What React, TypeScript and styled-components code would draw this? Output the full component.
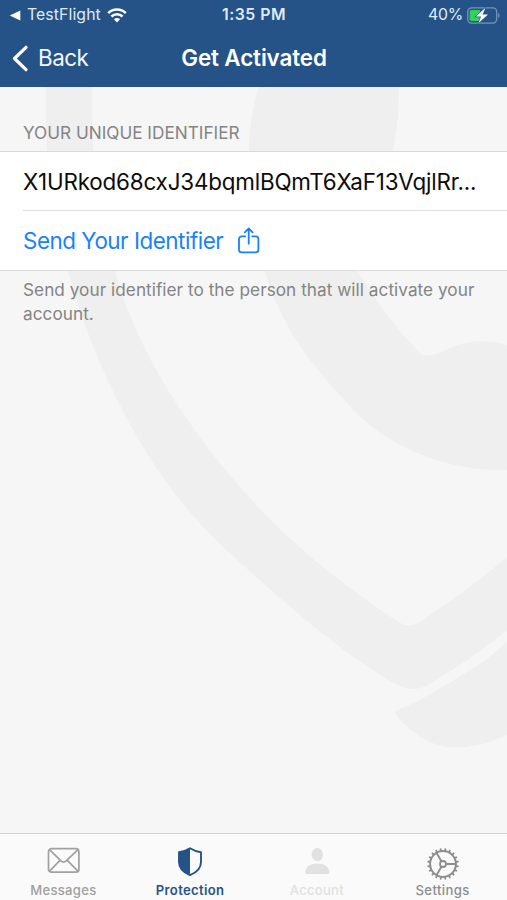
import React from 'react';
import styled, { createGlobalStyle } from 'styled-components';

const GlobalStyle = createGlobalStyle`
  * { box-sizing: border-box; }
  body { margin: 0; background: #f6f6f6; font-family: Inter, "Liberation Sans", sans-serif; }
`;

const Screen = styled.div`
  width: 507px;
  height: 900px;
  display: flex;
  flex-direction: column;
  overflow: hidden;
  background: #f6f6f6;
`;

const Header = styled.header`
  flex: none;
  height: 87px;
  background: #255387;
  color: #fff;
`;

const StatusBar = styled.div`
  height: 29px;
  padding: 0 7px 0 9px;
  display: grid;
  grid-template-columns: 1fr auto 1fr;
  align-items: center;
  font-size: 15.8px;
  line-height: 30px;
  color: #dfeaf6;
`;

const StatusGroup = styled.div<{ $end?: boolean }>`
  display: flex;
  align-items: center;
  justify-content: ${p => (p.$end ? 'flex-end' : 'flex-start')};
  gap: ${p => (p.$end ? 4 : 6)}px;
  height: 29px;
`;

const StatusText = styled.span<{ $spacing: number; $weight?: number }>`
  letter-spacing: ${p => p.$spacing}px;
  font-weight: ${p => p.$weight ?? 400};
`;

const Clock = styled(StatusText)`
  margin-left: -1px;
`;

const NavBar = styled.nav`
  height: 58px;
  padding: 0 12px;
  display: grid;
  grid-template-columns: 1fr auto 1fr;
  align-items: center;
  font-size: 22.4px;
  line-height: 58px;
`;

const BackButton = styled.button`
  display: flex;
  align-items: center;
  gap: 9px;
  padding: 0;
  border: 0;
  background: none;
  color: #f1f7fd;
  font: inherit;
  letter-spacing: -0.5px;
`;

const Title = styled.h1`
  margin: 0 0 0 1px;
  font-size: 22.4px;
  font-weight: 600;
  letter-spacing: -0.12px;
`;

const Content = styled.main`
  position: relative;
  flex: 1;
  min-height: 0;
`;

const Watermark = styled.svg`
  position: absolute;
  inset: 0;
  fill: #efefef;
`;

const Section = styled.section`
  position: relative;
`;

const SectionLabel = styled.h2`
  margin: 0;
  height: 64px;
  padding: 35px 23px 0;
  font-size: 17.2px;
  font-weight: 400;
  line-height: 22px;
  color: #848484;
`;

const List = styled.div`
  height: 120px;
  padding-left: 23px;
  background: #fff;
  border-top: 1px solid #dadada;
  border-bottom: 1px solid #dadada;
`;

const Row = styled.div<{ $action?: boolean }>`
  height: ${p => (p.$action ? 60 : 58)}px;
  display: flex;
  align-items: center;
  gap: 15px;
  font-size: 22.4px;
  letter-spacing: ${p => (p.$action ? -0.46 : -0.18)}px;
  color: ${p => (p.$action ? '#1a82f7' : '#0c0c0c')};
  white-space: nowrap;

  & + & { border-top: 1px solid #dedede; }
`;

const Footnote = styled.p`
  margin: 0;
  padding: 7px 23px 0;
  font-size: 17.2px;
  line-height: 24.3px;
  letter-spacing: 0.04px;
  color: #848484;
`;

const TabBar = styled.nav`
  flex: none;
  height: 67px;
  display: grid;
  grid-template-columns: repeat(4, 1fr);
  border-top: 1px solid #d4d4d4;
  background: #fafafa;
`;

const Tab = styled.div<{ $color: string; $weight?: number; $spacing: number }>`
  display: flex;
  flex-direction: column;
  align-items: center;
  color: ${p => p.$color};
  font-size: 13.1px;
  font-weight: ${p => p.$weight ?? 500};
  letter-spacing: ${p => p.$spacing}px;
  line-height: 18px;

  &:last-child { padding-right: 2px; }
`;

const TabIcon = styled.div<{ $low?: boolean }>`
  height: 47px;
  padding-top: ${p => (p.$low ? 13 : 10)}px;
  svg { display: block; }
`;

const CaretLeft = () => (
  <svg width="12" height="11" viewBox="0 0 12 11"><path d="M11.3.6v9.8L.8 5.5z" fill="#fff" /></svg>
);

const Wifi = () => (
  <svg width="20" height="15" viewBox="0 0 20 15" fill="none" stroke="#fff" strokeWidth="2.5">
    <path d="M1.2 5.1a12.4 12.4 0 0 1 17.6 0M4.4 8.5a7.9 7.9 0 0 1 11.2 0" />
    <path d="M10 14.6 6.9 11.3a4.4 4.4 0 0 1 6.2 0z" fill="#fff" stroke="none" />
  </svg>
);

const Battery = () => (
  <svg width="33" height="17" viewBox="0 0 33 17">
    <rect x=".7" y=".9" width="29" height="15.2" rx="4" fill="none" stroke="#7595b9" strokeWidth="1.3" />
    <path d="M31.2 6v5c1.8-.7 1.8-4.3 0-5" fill="#7595b9" />
    <path d="M4.4 3h8.5v11H4.4a1.8 1.8 0 0 1-1.8-1.8V4.8A1.8 1.8 0 0 1 4.4 3z" fill="#32d158" />
    <path d="M18.5.8 8.8 9.6h5.3l-2.8 6.7L21 7.4h-5.4z" fill="#fff" stroke="#255387" strokeWidth="1.2" paintOrder="stroke" />
  </svg>
);

const ChevronLeft = () => (
  <svg width="17" height="27" viewBox="0 0 17 27" fill="none" stroke="#fff" strokeWidth="3.2" strokeLinecap="round" strokeLinejoin="round">
    <path d="M14 2.3 2.5 13.5 14 24.7" />
  </svg>
);

const ShareIcon = () => (
  <svg width="22" height="27" viewBox="0 0 22 27" fill="none" stroke="currentColor" strokeWidth="1.8" strokeLinecap="round" strokeLinejoin="round">
    <path d="M7.2 9.3H3.6A2.6 2.6 0 0 0 1 11.9v10.9a2.6 2.6 0 0 0 2.6 2.6h14.2a2.6 2.6 0 0 0 2.6-2.6V11.9a2.6 2.6 0 0 0-2.6-2.6h-3.6M10.7 16.7V1.7M6.8 5.3l3.9-3.9 3.9 3.9" />
  </svg>
);

const MailIcon = () => (
  <svg width="33" height="33" viewBox="0 0 33 33" fill="none" stroke="currentColor" strokeWidth="1.7" strokeLinejoin="round">
    <rect x="1.5" y="4.7" width="30.4" height="23.5" rx="3" />
    <path d="m2.5 5.7 11.5 11.1c1.6 1.5 3.6 1.5 5.2 0L30.9 5.7M2.5 27.200l10.600-10.900M30.900 27.200 20.300 16.300" />
  </svg>
);

const ShieldIcon = () => (
  <svg width="26" height="33" viewBox="0 0 26 33">
    <path d="M13 4.3c3.2 2.1 7 3.4 11 3.9v9.7c0 6.5-4.1 10.4-11 13.2C6.1 28.3 2 24.4 2 17.9V8.2c4-.5 7.8-1.8 11-3.9z" fill="none" stroke="currentColor" strokeWidth="1.9" strokeLinejoin="round" />
    <path d="M13 4.3c-3.2 2.1-7 3.4-11 3.9v9.7c0 6.5 4.1 10.4 11 13.2z" fill="currentColor" />
  </svg>
);

const PersonIcon = () => (
  <svg width="26" height="33" viewBox="0 0 26 33" fill="currentColor">
    <ellipse cx="13.3" cy="10.6" rx="5.7" ry="6.5" />
    <path d="M1.3 28c0-4.6 4.5-8.6 12-8.6s12 4 12 8.6c0 1.3-.6 2-2 2H3.3c-1.4 0-2-.7-2-2z" />
  </svg>
);

const GearIcon = () => (
  <svg width="34" height="34" viewBox="-17 -17 34 34" fill="none" stroke="currentColor">
    {Array.from({ length: 20 }, (_, i) => (
      <path key={i} d="M-1.1-13.3-.7-15.8H.7l.4 2.5z" transform={`rotate(${i * 18 + 9})`} fill="currentColor" stroke="none" />
    ))}
    <circle r="12.9" strokeWidth="2" />
    <circle r="3" strokeWidth="1.8" />
    <path d="M3.2 0H12.5M-1.6-2.8-6.4-11M-1.6 2.8-6.4 11" strokeWidth="1.9" />
  </svg>
);

export default function App() {
  return (
    <>
      <GlobalStyle />
      <Screen>
        <Header>
          <StatusBar>
            <StatusGroup>
              <CaretLeft />
              <StatusText $spacing={0.1}>TestFlight</StatusText>
              <Wifi />
            </StatusGroup>
            <Clock $spacing={0.5} $weight={600}>1:35 PM</Clock>
            <StatusGroup $end>
              <StatusText $spacing={-0.2}>40%</StatusText>
              <Battery />
            </StatusGroup>
          </StatusBar>
          <NavBar>
            <BackButton><ChevronLeft />Back</BackButton>
            <Title>Get Activated</Title>
          </NavBar>
        </Header>
        <Content>
          <Watermark width="507" height="746" viewBox="0 87 507 746" aria-hidden="true">
            <path d="M46 87C45 150 48 205 68 271C82 322 99 365 124 413C162 486 200 527 243 565C288 606 330 642 370 668C404 692 415 693 431 683Q472 659 507 630V557Q471 588 435 611L420 622Q411 628 402 624Q370 604 333 575Q283 536 240 487Q198 440 160 377Q129 322 115 271C96 209 91 151 92 87Z" />
            <path d="M259 87C246 125 242 195 265 272C280 325 315 373 367 423C406 455 460 472 507 470V345C483 338 466 342 453 347C430 356 426 359 419 352Q385 317 358 272V230L393 151Q399 120 399 87Z" />
            <path d="M398 710Q423 700 467 672Q489 659 507 642V735Q460 756 430 742Q412 734 396 715Q393 712 398 710Z" />
          </Watermark>
          <Section>
            <SectionLabel>YOUR UNIQUE IDENTIFIER</SectionLabel>
            <List>
              <Row>X1URkod68cxJ34bqmlBQmT6XaF13VqjlRr...</Row>
              <Row $action>Send Your Identifier<ShareIcon /></Row>
            </List>
            <Footnote>Send your identifier to the person that will activate your account.</Footnote>
          </Section>
        </Content>
        <TabBar>
          <Tab $color="#a0a0a0" $spacing={0.3}><TabIcon><MailIcon /></TabIcon>Messages</Tab>
          <Tab $color="#255387" $weight={600} $spacing={0.35}><TabIcon><ShieldIcon /></TabIcon>Protection</Tab>
          <Tab $color="#e1e1e1" $spacing={0.25}><TabIcon><PersonIcon /></TabIcon>Account</Tab>
          <Tab $color="#8d8d8d" $spacing={0.4}><TabIcon $low><GearIcon /></TabIcon>Settings</Tab>
        </TabBar>
      </Screen>
    </>
  );
}
